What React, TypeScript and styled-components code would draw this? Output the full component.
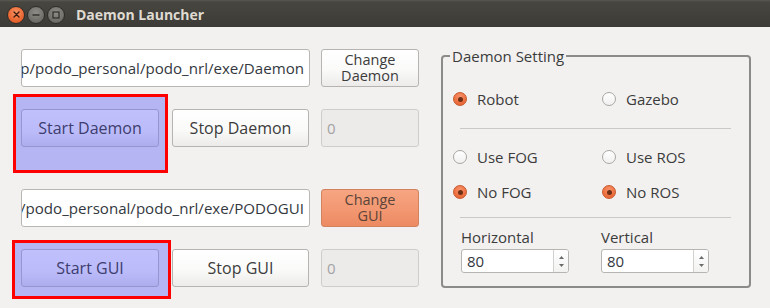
import React from "react";
import styled, { createGlobalStyle, css } from "styled-components";

const Global = createGlobalStyle`
  html, body { margin: 0; padding: 0; background: #f2f1f0; }
  body { font-family: "Open Sans", "Noto Sans", sans-serif; }
  * { box-sizing: border-box; }
`;

const Window = styled.div`
  width: 770px;
  height: 308px;
  display: flex;
  flex-direction: column;
  background: #f2f1f0;
  overflow: hidden;
`;

const TitleBar = styled.div`
  height: 27px;
  flex: none;
  display: flex;
  align-items: center;
  padding-left: 7px;
  background: linear-gradient(to bottom, #5a5853 0px, #47463f 2px, #3c3b37 100%);
`;

const WinButtons = styled.div`
  display: flex;
  gap: 2px;
  margin-top: 2px;
`;

const WinButton = styled.div<{ $kind: "close" | "min" | "max" }>`
  width: 18px;
  height: 18px;
  border-radius: 50%;
  display: flex;
  align-items: center;
  justify-content: center;
  border: 1px solid #2e2d2a;
  ${(p) =>
    p.$kind === "close"
      ? css`
          background: radial-gradient(circle at 50% 35%, #f79467 0%, #ec6a35 55%, #d8501e 100%);
        `
      : css`
          background: radial-gradient(circle at 50% 35%, #8e8c86 0%, #73716b 60%, #5f5d58 100%);
        `}
`;

const Title = styled.div`
  margin-left: 11px;
  margin-top: 1px;
  font-family: "Open Sans", sans-serif;
  font-weight: 700;
  font-size: 14px;
  color: #dfdbd2;
`;

const Content = styled.div`
  flex: 1;
  display: flex;
  padding: 22px 0 0 21px;
  gap: 22px;
`;

const LeftColumn = styled.div`
  width: 398px;
  display: flex;
  flex-direction: column;
`;

const Row = styled.div<{ $top: number }>`
  display: flex;
  align-items: stretch;
  height: 38px;
  margin-top: ${(p) => p.$top}px;
`;

const baseText = css`
  font-family: "Open Sans", "Noto Sans", sans-serif;
  font-size: 15px;
`;

const LineEdit = styled.div`
  ${baseText};
  font-size: 15.1px;
  width: 289px;
  height: 38px;
  background: #ffffff;
  border: 1px solid #b9b7b3;
  border-radius: 3px;
  display: flex;
  align-items: center;
  justify-content: flex-end;
  padding-right: 5px;
  overflow: hidden;
  white-space: nowrap;
  color: #333840;
`;

const Button = styled.div<{ $w: number; $ml?: number; $variant?: "normal" | "start" | "orange"; $two?: boolean }>`
  ${baseText};
  font-size: ${(p) => (p.$two ? "14.5px" : "16px")};
  width: ${(p) => p.$w}px;
  margin-left: ${(p) => p.$ml ?? 0}px;
  height: 38px;
  border-radius: 3px;
  display: flex;
  align-items: center;
  justify-content: center;
  text-align: center;
  line-height: 16px;
  white-space: pre-line;
  ${(p) =>
    p.$variant === "start"
      ? css`
          background: linear-gradient(to bottom, #c0c0fd 0%, #bbbbfa 60%, #adadee 100%);
          border: 1px solid #9595cf;
          color: #3d3d6e;
        `
      : p.$variant === "orange"
      ? css`
          background: linear-gradient(to bottom, #f6a582 0%, #f29670 60%, #ec8a62 100%);
          border: 1px solid #d3825f;
          color: #5b4438;
        `
      : css`
          background: linear-gradient(to bottom, #ffffff 0%, #fafaf9 55%, #ecebea 100%);
          border: 1px solid #b6b4b0;
          color: #3c3c3c;
        `}
`;

const DisabledInput = styled.div`
  ${baseText};
  width: 98px;
  margin-left: 12px;
  height: 38px;
  border: 1px solid #cfcdc9;
  border-radius: 3px;
  background: #ecebea;
  color: #a3a3a3;
  display: flex;
  align-items: center;
  padding-left: 5px;
`;

const Highlight = styled.div<{ $t: number; $r: number; $b: number; $l: number }>`
  position: relative;
  isolation: isolate;
  display: flex;
  &::before {
    content: "";
    position: absolute;
    top: -${(p) => p.$t}px;
    left: -${(p) => p.$l}px;
    right: -${(p) => p.$r}px;
    bottom: -${(p) => p.$b}px;
    background: #b5b5f4;
    border: 3px solid #ff0000;
    z-index: -1;
  }
`;

const Group = styled.fieldset`
  margin: -2px 0 0 0;
  width: 310px;
  align-self: flex-start;
  border: 2px solid #8b8b8a;
  border-radius: 4px;
  padding: 24px 10px 13px 10px;
  min-width: 0;
`;

const Legend = styled.legend`
  ${baseText};
  color: #3c3c3c;
  line-height: 18px;
  padding: 0 2px;
  margin-left: -3px;
`;

const RadioGrid = styled.div`
  display: grid;
  grid-template-columns: 149px 1fr;
`;

const RadioItem = styled.div`
  ${baseText};
  display: flex;
  align-items: center;
  height: 20px;
  gap: 10px;
  color: #3c3c3c;
`;

const RadioCircle = styled.span<{ $on?: boolean }>`
  width: 14px;
  height: 14px;
  border-radius: 50%;
  flex: none;
  display: flex;
  align-items: center;
  justify-content: center;
  ${(p) =>
    p.$on
      ? css`
          background: radial-gradient(circle at 50% 30%, #f7926a 0%, #ee6f3e 60%, #e0612f 100%);
          border: 1px solid #c75a2f;
          &::after {
            content: "";
            width: 5px;
            height: 5px;
            border-radius: 50%;
            background: #6e2f16;
          }
        `
      : css`
          background: linear-gradient(to bottom, #ffffff, #f1f0ef);
          border: 1px solid #a9a7a3;
        `}
`;

const Separator = styled.div<{ $top: number }>`
  height: 1px;
  background: #cbc9c6;
  margin: ${(p) => p.$top}px 8px 0 7px;
`;

const RadioBlock = styled(RadioGrid)<{ $top: number; $gap?: number }>`
  margin-top: ${(p) => p.$top}px;
  row-gap: ${(p) => p.$gap ?? 0}px;
`;

const SpinGrid = styled.div`
  display: grid;
  grid-template-columns: 140px 1fr;
  padding-left: 8px;
  margin-top: 9px;
`;

const SpinField = styled.div`
  display: flex;
  flex-direction: column;
`;

const SpinLabel = styled.div`
  ${baseText};
  line-height: 20px;
  color: #3c3c3c;
`;

const SpinBox = styled.div`
  margin-top: 2px;
  width: 108px;
  height: 24px;
  border: 1px solid #b7b5b1;
  border-radius: 3px;
  background: #fff;
  display: flex;
  overflow: hidden;
`;

const SpinValue = styled.div`
  ${baseText};
  flex: 1;
  display: flex;
  align-items: center;
  padding-left: 5px;
  color: #333840;
`;

const SpinArrows = styled.div`
  width: 15px;
  border-left: 1px solid #d3d1cd;
  background: linear-gradient(to bottom, #ffffff, #f3f2f1);
  display: flex;
  flex-direction: column;
  align-items: center;
  justify-content: center;
  gap: 5px;
`;

const Arrow = ({ up }: { up?: boolean }) => (
  <svg width="5" height="3" viewBox="0 0 5 3">
    <path d={up ? "M0 3 L2.5 0 L5 3 Z" : "M0 0 L2.5 3 L5 0 Z"} fill="#6a6a6a" />
  </svg>
);

const Spin = ({ label, value }: { label: string; value: string }) => (
  <SpinField>
    <SpinLabel>{label}</SpinLabel>
    <SpinBox>
      <SpinValue>{value}</SpinValue>
      <SpinArrows>
        <Arrow up />
        <Arrow />
      </SpinArrows>
    </SpinBox>
  </SpinField>
);

const Radio = ({ label, on }: { label: string; on?: boolean }) => (
  <RadioItem>
    <RadioCircle $on={on} />
    {label}
  </RadioItem>
);

const CloseGlyph = () => (
  <svg width="7" height="7" viewBox="0 0 7 7">
    <path d="M1 1 L6 6 M6 1 L1 6" stroke="#3a1a0c" strokeWidth="1.3" strokeLinecap="round" />
  </svg>
);
const MinGlyph = () => (
  <svg width="8" height="8" viewBox="0 0 8 8">
    <path d="M0.5 4 L7.5 4" stroke="#2f2e2b" strokeWidth="1.4" />
  </svg>
);
const MaxGlyph = () => (
  <svg width="8" height="8" viewBox="0 0 8 8">
    <rect x="1" y="1" width="6" height="6" fill="none" stroke="#2f2e2b" strokeWidth="1.2" />
  </svg>
);

export default function App() {
  return (
    <>
      <Global />
      <Window>
        <TitleBar>
          <WinButtons>
            <WinButton $kind="close">
              <CloseGlyph />
            </WinButton>
            <WinButton $kind="min">
              <MinGlyph />
            </WinButton>
            <WinButton $kind="max">
              <MaxGlyph />
            </WinButton>
          </WinButtons>
          <Title>Daemon Launcher</Title>
        </TitleBar>
        <Content>
          <LeftColumn>
            <Row $top={0}>
              <LineEdit>/home/rainbow/Desktop/podo_personal/podo_nrl/exe/Daemon</LineEdit>
              <Button $w={98} $ml={11} $two>{"Change\nDaemon"}</Button>
            </Row>
            <Row $top={22}>
              <Highlight $t={15} $l={8} $r={9} $b={26}>
                <Button $w={138} $variant="start">Start Daemon</Button>
              </Highlight>
              <Button $w={137} $ml={13}>Stop Daemon</Button>
              <DisabledInput>0</DisabledInput>
            </Row>
            <Row $top={42}>
              <LineEdit>/home/rainbow/Desktop/podo_personal/podo_nrl/exe/PODOGUI</LineEdit>
              <Button $w={98} $ml={11} $variant="orange" $two>{"Change\nGUI"}</Button>
            </Row>
            <Row $top={22}>
              <Highlight $t={9} $l={9} $r={12} $b={12}>
                <Button $w={138} $variant="start">Start GUI</Button>
              </Highlight>
              <Button $w={137} $ml={13}>Stop GUI</Button>
              <DisabledInput>0</DisabledInput>
            </Row>
          </LeftColumn>
          <Group>
            <Legend>Daemon Setting</Legend>
            <RadioBlock $top={0}>
              <Radio label="Robot" on />
              <Radio label="Gazebo" />
            </RadioBlock>
            <Separator $top={19} />
            <RadioBlock $top={18} $gap={15}>
              <Radio label="Use FOG" />
              <Radio label="Use ROS" />
              <Radio label="No FOG" on />
              <Radio label="No ROS" on />
            </RadioBlock>
            <Separator $top={15} />
            <SpinGrid>
              <Spin label="Horizontal" value="80" />
              <Spin label="Vertical" value="80" />
            </SpinGrid>
          </Group>
        </Content>
      </Window>
    </>
  );
}
